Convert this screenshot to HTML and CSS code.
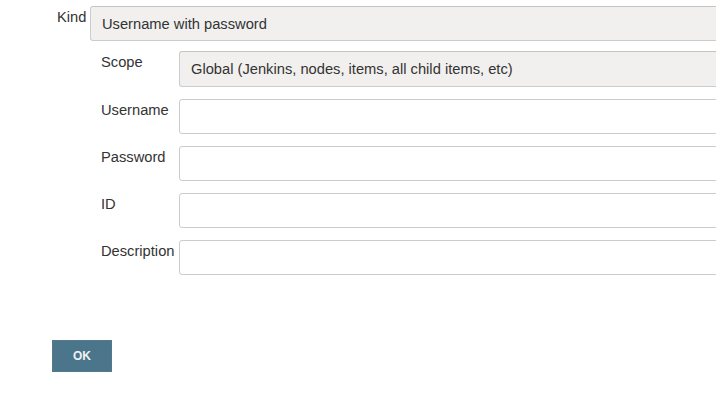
FILE: index.html
```html
<!DOCTYPE html>
<html>
<head>
<meta charset="utf-8">
<link rel="stylesheet" href="styles.css">
</head>
<body>
<form class="form">
  <div class="row kind-row">
    <label class="label kind-label">Kind</label>
    <div class="field select-box">Username with password</div>
  </div>
  <div class="nested">
    <div class="row scope-row">
      <label class="label">Scope</label>
      <div class="field select-box">Global (Jenkins, nodes, items, all child items, etc)</div>
    </div>
    <div class="row">
      <label class="label">Username</label>
      <input class="field text-input" type="text">
    </div>
    <div class="row">
      <label class="label">Password</label>
      <input class="field text-input" type="password">
    </div>
    <div class="row">
      <label class="label">ID</label>
      <input class="field text-input" type="text">
    </div>
    <div class="row">
      <label class="label">Description</label>
      <input class="field text-input" type="text">
    </div>
  </div>
  <div class="actions">
    <button class="ok-btn" type="button">OK</button>
  </div>
</form>
</body>
</html>
```
FILE: styles.css
```css
html, body {
  margin: 0;
  padding: 0;
  background: #fff;
  overflow: hidden;
}
body {
  font-family: "Liberation Sans", Arial, sans-serif;
  font-size: 14.7px;
  color: #333;
  width: 716px;
  height: 403px;
}
.form {
  display: flex;
  flex-direction: column;
  padding-top: 6px;
  overflow: hidden;
}
.row {
  display: flex;
  align-items: flex-start;
}
.kind-row {
  padding-left: 57px;
}
.kind-label {
  width: 33px;
}
.label {
  box-sizing: border-box;
  padding-top: 3px;
  line-height: 16px;
  white-space: nowrap;
  flex: none;
}
.nested {
  display: flex;
  flex-direction: column;
  gap: 12px;
  padding-left: 101px;
  margin-top: 10px;
}
.nested .label {
  width: 78px;
}
.scope-row .field {
  height: 36px;
}
.field {
  box-sizing: border-box;
  width: 700px;
  height: 35px;
  border: 1px solid #ccc;
  border-radius: 3px;
  flex: none;
}
.select-box {
  background: #f1f0ee;
  border-top-color: #c4c4c4;
  padding-left: 11px;
  display: flex;
  align-items: center;
  color: #333;
}
.text-input {
  background: #fff;
  margin: 0;
  padding: 0 11px;
  font: inherit;
}
.actions {
  padding-left: 52px;
  margin-top: 65px;
}
.ok-btn {
  width: 60px;
  height: 32px;
  background: #4b758b;
  border: 1px solid #54798c;
  color: #eef2f4;
  font-family: "Liberation Sans", Arial, sans-serif;
  font-weight: bold;
  font-size: 12px;
  padding: 0;
  border-radius: 0;
}
```
